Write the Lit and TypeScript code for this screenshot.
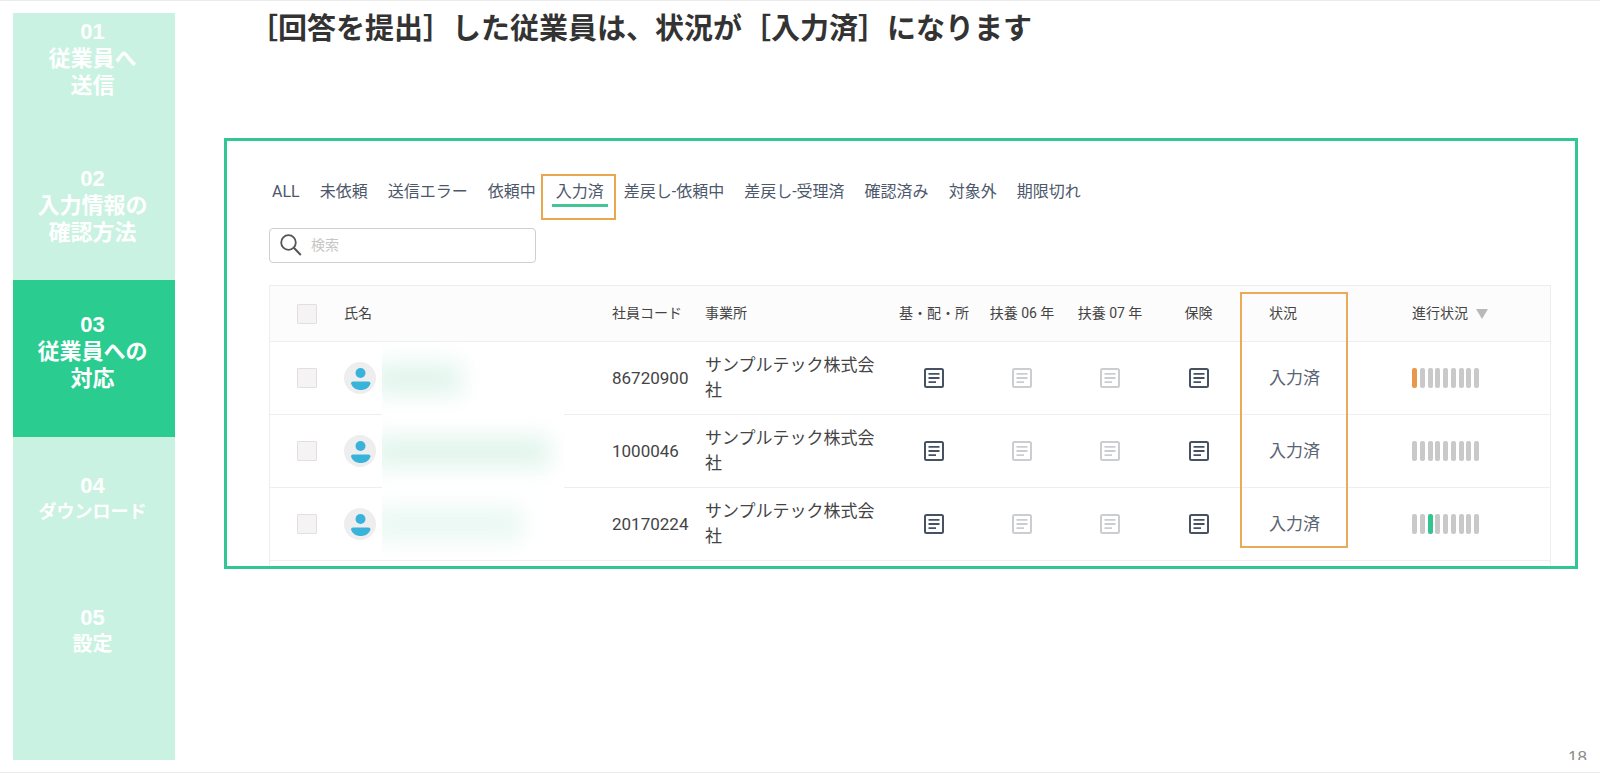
import { LitElement, html, css, svg, nothing } from "lit";
import { customElement, state } from "lit/decorators.js";
import { classMap } from "lit/directives/class-map.js";

interface Step {
  no: string;
  lines: string[];
  text?: string;
  size: string;
}

interface Employee {
  code: string;
  office: string;
  mask: string;
  mark: number;
  tone: string;
}

const STEPS: Step[] = [
  { no: "01", lines: ["従業員へ", "送信"], size: "first" },
  { no: "02", lines: ["入力情報の", "確認方法"], size: "second" },
  { no: "03", lines: ["従業員への", "対応"], size: "current" },
  { no: "04", lines: ["ダウンロード"], text: "smaller", size: "later" },
  { no: "05", lines: ["設定"], text: "small", size: "later" },
];

const TABS = [
  "ALL",
  "未依頼",
  "送信エラー",
  "依頼中",
  "入力済",
  "差戻し-依頼中",
  "差戻し-受理済",
  "確認済み",
  "対象外",
  "期限切れ",
];

const EMPLOYEES: Employee[] = [
  { code: "86720900", office: "サンプルテック株式会社", mask: "short", mark: 0, tone: "orange" },
  { code: "1000046", office: "サンプルテック株式会社", mask: "long", mark: -1, tone: "" },
  { code: "20170224", office: "サンプルテック株式会社", mask: "medium", mark: 2, tone: "green" },
];

const FORM_STATES = [true, false, false, true];

const formIcon = svg`
  <rect x="1" y="1" width="18" height="18" rx="1.5" fill="none" stroke="currentColor" stroke-width="2"/>
  <path d="M4.5 5.8H15.5M4.5 10H15.5M4.5 14.2H12" fill="none" stroke="currentColor" stroke-width="1.8"/>`;

@customElement("step-nav")
export class StepNav extends LitElement {
  static styles = css`
    :host {
      display: block;
      background: #c9f2e2;
    }
    .step {
      display: block;
      box-sizing: border-box;
      padding: 5px 3px 0 0;
      color: #fff;
      text-decoration: none;
      text-align: center;
      font: bold 22px/27px "Liberation Sans", "Noto Sans CJK JP", sans-serif;
    }
    .line {
      display: block;
    }
    .small {
      font-size: 20px;
    }
    .smaller {
      font-size: 18px;
    }
    .first {
      min-height: 147px;
    }
    .second {
      min-height: 120px;
    }
    .current {
      min-height: 157px;
      padding-top: 31px;
      background: #2acc90;
    }
    .later {
      min-height: 132px;
      padding-top: 35px;
    }
  `;

  render() {
    return html`<nav>
      ${STEPS.map(
        (s) => html`<a
          class="step ${s.size}"
          href="#step-${s.no}"
          aria-current=${s.size === "current" ? "step" : nothing}
          ><span class="line">${s.no}</span>${s.lines.map(
            (l) => html`<span class="line ${s.text ?? ""}">${l}</span>`
          )}</a
        >`
      )}
    </nav>`;
  }
}

@customElement("employee-table")
export class EmployeeTable extends LitElement {
  static styles = css`
    :host {
      display: block;
      position: relative;
      padding-bottom: 5px;
      border: 1px solid #ededed;
      border-bottom: 0;
      color: #444;
    }
    .table {
      width: 100%;
      table-layout: fixed;
      border-collapse: separate;
      border-spacing: 0;
    }
    .w-check {
      width: 67px;
    }
    .w-code {
      width: 93px;
    }
    .w-office {
      width: 191px;
    }
    .w-form {
      width: 88px;
    }
    .w-insurance {
      width: 89px;
    }
    .w-status {
      width: 107px;
    }
    .w-progress {
      width: 201px;
    }
    th,
    td {
      box-sizing: border-box;
      padding: 0 0 0 7px;
      border-bottom: 1px solid #eeeeee;
      text-align: left;
      vertical-align: middle;
    }
    th {
      height: 56px;
      padding-bottom: 2px;
      background: #fcfcfc;
      font-size: 14px;
      line-height: 20px;
      font-weight: 400;
      white-space: nowrap;
    }
    td {
      height: 73px;
      font-size: 17px;
      line-height: 25px;
    }
    th.check,
    td.check {
      padding: 0 0 0 27px;
    }
    th.form,
    td.form {
      padding-left: 2px;
      text-align: center;
    }
    th.status,
    td.status {
      padding-left: 27px;
    }
    td.status {
      color: #5b6472;
    }
    th.progress,
    td.progress {
      padding-left: 63px;
    }
    .office {
      padding-right: 10px;
    }
    .box {
      display: block;
      appearance: none;
      box-sizing: border-box;
      width: 20px;
      height: 20px;
      margin: 0;
      border: 1px solid #e2dfdf;
      border-radius: 1px;
      background: #f5f3f3;
    }
    .person {
      display: flex;
      align-items: center;
      gap: 6px;
      height: 72px;
    }
    .avatar {
      flex: none;
      width: 32px;
      height: 32px;
    }
    .mask {
      display: flex;
      align-items: center;
      flex: none;
      width: 182px;
      height: 64px;
      overflow: hidden;
      background: #fff;
    }
    .covering {
      height: 74px;
      margin-bottom: -2px;
      position: relative;
    }
    .blur {
      height: 32px;
      margin-left: -10px;
      background: #e2f5ed;
      filter: blur(11px);
    }
    .blur.short {
      width: 90px;
    }
    .blur.long {
      width: 178px;
    }
    .blur.medium {
      width: 150px;
      background: #e9f8f2;
    }
    .icon {
      display: block;
      margin: 0 auto;
      width: 20px;
      height: 20px;
      color: #cbcdd1;
    }
    .on {
      color: #465163;
    }
    .sort {
      display: inline-flex;
      align-items: center;
      gap: 8px;
      padding: 0;
      border: 0;
      background: none;
      color: inherit;
      font: inherit;
    }
    .arrow {
      width: 12px;
      height: 10px;
      margin-top: 2px;
    }
    .bars {
      display: flex;
      justify-content: space-between;
      width: 67px;
    }
    .bar {
      width: 5px;
      height: 20px;
      border-radius: 2px;
      background: #c9c9c9;
    }
    .orange {
      background: #e9974b;
    }
    .green {
      background: #35c48f;
    }
    .frame {
      position: absolute;
      top: 6px;
      right: 202px;
      bottom: 18px;
      width: 108px;
      box-sizing: border-box;
      border: 2px solid #e9ab58;
      pointer-events: none;
    }
  `;

  private row(e: Employee, i: number, all: Employee[]) {
    return html`<tr>
      <td class="check"><input class="box" type="checkbox" aria-label="${e.code}を選択" /></td>
      <td>
        <div class="person">
          <svg class="avatar" viewBox="0 0 32 32" aria-hidden="true">
            <circle cx="16" cy="16" r="16" fill="#eeeeef" />
            <circle cx="16.5" cy="11" r="5" fill="#3ab3dc" />
            <path
              d="M9 19.5H24.5Q26.5 19.5 26.5 21.5C25 26 21 28 16.7 28S8.5 26 7 21.5Q7 19.5 9 19.5Z"
              fill="#38b4da"
            />
          </svg>
          <div class=${classMap({ mask: true, covering: i < all.length - 1 })}>
            <div class="blur ${e.mask}"></div>
          </div>
        </div>
      </td>
      <td>${e.code}</td>
      <td class="office">${e.office}</td>
      ${FORM_STATES.map(
        (on) => html`<td class="form">
          <svg class=${classMap({ icon: true, on })} viewBox="0 0 20 20" aria-hidden="true">${formIcon}</svg>
        </td>`
      )}
      <td class="status">入力済</td>
      <td class="progress">
        <div class="bars">
          ${Array.from({ length: 9 }, (_, n) => html`<span class="bar ${n === e.mark ? e.tone : ""}"></span>`)}
        </div>
      </td>
    </tr>`;
  }

  render() {
    return html`<table class="table">
        <colgroup>
          <col class="w-check" />
          <col />
          <col class="w-code" />
          <col class="w-office" />
          <col class="w-form" />
          <col class="w-form" />
          <col class="w-form" />
          <col class="w-insurance" />
          <col class="w-status" />
          <col class="w-progress" />
        </colgroup>
        <thead>
          <tr>
            <th class="check"><input class="box" type="checkbox" aria-label="すべて選択" /></th>
            <th>氏名</th>
            <th>社員コード</th>
            <th>事業所</th>
            <th class="form">基・配・所</th>
            <th class="form">扶養 06 年</th>
            <th class="form">扶養 07 年</th>
            <th class="form">保険</th>
            <th class="status">状況</th>
            <th class="progress">
              <button class="sort" type="button">
                進行状況<svg class="arrow" viewBox="0 0 12 10" aria-hidden="true">
                  <path d="M0 0H12L6 10Z" fill="#b9b9b9" />
                </svg>
              </button>
            </th>
          </tr>
        </thead>
        <tbody>
          ${EMPLOYEES.map((e, i, all) => this.row(e, i, all))}
        </tbody>
      </table>
      <div class="frame"></div>`;
  }
}

@customElement("app-root")
export class AppRoot extends LitElement {
  @state() private active = "入力済";

  static styles = css`
    :host {
      display: grid;
      grid-template-columns: 162px minmax(0, 1fr);
      column-gap: 49px;
      box-sizing: border-box;
      min-height: 100vh;
      padding: 12px 13px;
      border-top: 1px solid #ececec;
      border-bottom: 1px solid #ececec;
      background: #fff;
      font-family: Roboto, "Noto Sans CJK JP", sans-serif;
    }
    .main {
      display: flex;
      flex-direction: column;
    }
    .title {
      margin: 0 0 98px;
      padding-left: 25px;
      color: #333;
      font: bold 29px/27px "Noto Sans CJK JP", sans-serif;
    }
    .card {
      margin-right: 9px;
      padding: 39px 24px 0 42px;
      border: 3px solid #30c792;
    }
    .tabs {
      display: flex;
      gap: 12px;
      margin: 0 0 21px -1px;
    }
    .tab {
      position: relative;
      padding: 0 4px;
      border: 0;
      border-bottom: 3px solid transparent;
      background: none;
      color: #4d586b;
      font: 16px/24px Roboto, "Noto Sans CJK JP", sans-serif;
      white-space: nowrap;
    }
    .active {
      border-bottom-color: #45c496;
    }
    .frame {
      position: absolute;
      inset: -6px -8px -16px -11px;
      border: 2px solid #e9a74e;
      pointer-events: none;
    }
    .search {
      display: flex;
      align-items: center;
      gap: 9px;
      box-sizing: border-box;
      width: 267px;
      height: 35px;
      margin-bottom: 22px;
      padding: 0 10px 1px;
      border: 1px solid #cfcfcf;
      border-radius: 4px;
    }
    .lens {
      flex: none;
      width: 22px;
      height: 22px;
    }
    .query {
      flex: 1;
      min-width: 0;
      padding: 0;
      border: 0;
      outline: 0;
      background: none;
      color: #444;
      font: 14px/20px Roboto, "Noto Sans CJK JP", sans-serif;
    }
    .query::placeholder {
      color: #c6c6c6;
    }
    .page {
      height: 11px;
      margin-top: auto;
      overflow: hidden;
      color: #8c8c8c;
      text-align: right;
      font: 17px/18px "Liberation Sans", sans-serif;
    }
  `;

  render() {
    return html`<step-nav></step-nav>
      <main class="main">
        <h1 class="title">［回答を提出］した従業員は、状況が［入力済］になります</h1>
        <section class="card">
          <div class="tabs" role="tablist">
            ${TABS.map(
              (t) => html`<button
                type="button"
                role="tab"
                aria-selected=${t === this.active}
                class=${classMap({ tab: true, active: t === this.active })}
                @click=${() => (this.active = t)}
              >${t}${t === "入力済" ? html`<span class="frame"></span>` : nothing}</button>`
            )}
          </div>
          <label class="search">
            <svg class="lens" viewBox="0 0 22 22" aria-hidden="true">
              <circle cx="8.5" cy="8.5" r="7.3" fill="none" stroke="#555" stroke-width="1.8" />
              <path d="M13.8 13.8L20.8 21" fill="none" stroke="#555" stroke-width="2" />
            </svg>
            <input class="query" type="search" placeholder="検索" aria-label="検索" />
          </label>
          <employee-table></employee-table>
        </section>
        <footer class="page">18</footer>
      </main>`;
  }
}
